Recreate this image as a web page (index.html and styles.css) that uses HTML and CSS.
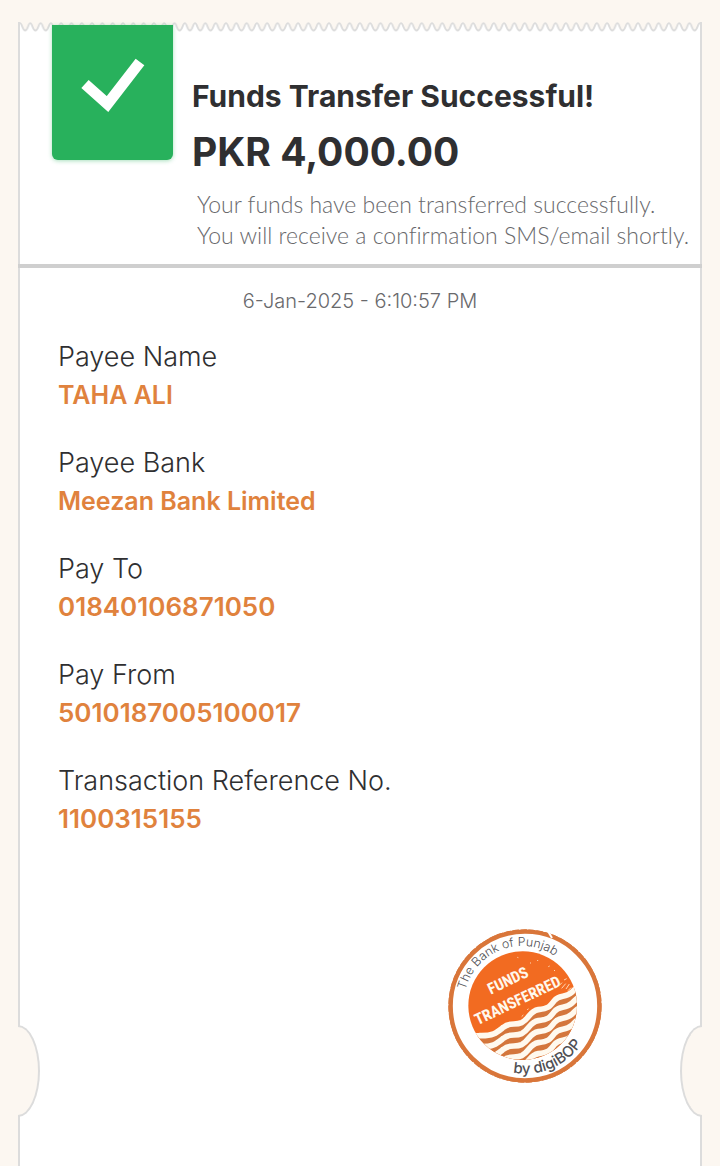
FILE: index.html
```html
<!DOCTYPE html>
<html lang="en">
<head>
<meta charset="utf-8">
<meta name="viewport" content="width=device-width, initial-scale=1">
<title>Funds Transfer Successful</title>
<link rel="stylesheet" href="styles.css">
</head>
<body>
<main class="page">
  <svg class="tear" aria-hidden="true">
    <defs>
      <pattern id="scallop" x="2" width="10.3" height="10" patternUnits="userSpaceOnUse">
        <path d="M0 1 C2 1 2.4 8.5 5.15 8.5 S8.3 1 10.3 1 V10 H0Z" fill="#fff"/>
        <path d="M-1 1.2 H0 C2 1 2.4 8.5 5.15 8.5 S8.3 1 10.3 1.2 H12" fill="none" stroke="#dcdcdc" stroke-width="1.8"/>
      </pattern>
    </defs>
    <rect width="100%" height="10" fill="url(#scallop)"/>
    <rect width="2" height="10" fill="#dcdcdc"/>
    <svg x="100%" overflow="visible"><rect x="-2" width="2" height="10" fill="#dcdcdc"/></svg>
  </svg>
  <article class="receipt">
    <header class="summary">
      <div class="badge">
        <svg class="tick" viewBox="0 0 64 54" aria-hidden="true"><path d="M4 26 L26.500 46 L59 4" fill="none" stroke="#fff" stroke-width="11"/></svg>
      </div>
      <div class="headline">
        <h1 class="title">Funds Transfer Successful!</h1>
        <p class="amount">PKR 4,000.00</p>
        <p class="message">Your funds have been transferred successfully.<br>You will receive a confirmation SMS/email shortly.</p>
      </div>
    </header>
    <time class="date" datetime="2025-01-06T18:10:57">6-Jan-2025 - 6:10:57 PM</time>
    <dl class="details">
      <div class="row"><dt class="label">Payee Name</dt><dd class="value">TAHA ALI</dd></div>
      <div class="row"><dt class="label">Payee Bank</dt><dd class="value">Meezan Bank Limited</dd></div>
      <div class="row"><dt class="label">Pay To</dt><dd class="value number">01840106871050</dd></div>
      <div class="row"><dt class="label">Pay From</dt><dd class="value number">5010187005100017</dd></div>
      <div class="row"><dt class="label">Transaction Reference No.</dt><dd class="value number">1100315155</dd></div>
    </dl>
    <svg class="stamp" viewBox="0 0 510 510" role="img" aria-label="Funds transferred stamp">
      <defs>
        <clipPath id="disc"><circle cx="248" cy="257" r="163"/></clipPath>
        <path id="wave" d="M70 352 C100 342 100 350 120 347 C160 348 170 338 190 322 C210 305 225 317 245 308 C268 297 268 273 295 269 C325 265 328 262 343 242 C358 222 375 235 395 217 C410 203 410 200 430 195"/>
        <path id="arc-top" d="M76 210 A176 176 0 0 1 400 168"/>
        <path id="arc-bottom" d="M219 458 A206 206 0 0 0 461 258"/>
      </defs>
      <circle cx="255" cy="258" r="223" fill="#fff" stroke="#d9763a" stroke-width="13"/>
      <circle cx="255" cy="258" r="227" fill="none" stroke="#d9763a" stroke-width="6" stroke-linecap="round" stroke-dasharray="16 8"/>
      <path d="M324 34 L336 54" stroke="#fff" stroke-width="6"/>
      <g clip-path="url(#disc)">
        <rect x="80" y="90" width="340" height="340" fill="#f26b21"/>
        <path d="M70 352 C100 342 100 350 120 347 C160 348 170 338 190 322 C210 305 225 317 245 308 C268 297 268 273 295 269 C325 265 328 262 343 242 C358 222 375 235 395 217 C410 203 410 200 430 195 V430 H70Z" fill="#d4763c"/>
        <g fill="none" stroke="#fff9ee" stroke-width="17">
          <use href="#wave"/>
          <use href="#wave" y="33"/>
          <use href="#wave" y="66"/>
          <use href="#wave" y="99"/>
          <use href="#wave" y="132"/>
          <use href="#wave" y="165"/>
        </g>
        <path d="M365 205 l12 -14 M378 207 l10 -15 M358 196 l8 -8 M372 180 l8 -4 M384 212 l9 -9 M270 128 l3 2 M292 120 l2 3 M325 140 l4 -2 M342 150 l3 3 M232 112 l3 1 M245 290 l5 -5 M262 270 l3 -4" stroke="#ffd9b8" stroke-width="3"/>
      </g>
      <text class="ring ring-light"><textPath href="#arc-top">The Bank of Punjab</textPath></text>
      <text class="ring ring-bold"><textPath href="#arc-bottom">by digiBOP</textPath></text>
      <g class="stamp-text">
        <text transform="translate(152 224) rotate(-25.500)">FUNDS</text>
        <text transform="translate(113 316) rotate(-25.500)">TRANSFERRED</text>
      </g>
    </svg>
    <span class="notch notch-left"></span>
    <span class="notch notch-right"></span>
  </article>
</main>
</body>
</html>
```
FILE: styles.css
```css
* { box-sizing: border-box; }
body { margin: 0; background: #fcf7f1; color: #2f2f31; font-family: Inter, "Liberation Sans", sans-serif; }
h1, p, dl, dd { margin: 0; }
.page { display: flex; flex-direction: column; min-height: 100vh; padding: 22px 18px 0; }
.tear { display: block; width: 100%; height: 10px; }
.receipt { position: relative; flex: 1; display: flex; flex-direction: column; background: #fff; border: solid #dcdcdc; border-width: 0 2px; }
.summary { display: flex; align-items: flex-start; gap: 19px; margin: 0 -2px; padding: 0 4px 13px 34px; border-bottom: 4px solid #cfcfcf; }
.badge { flex: none; display: flex; justify-content: center; width: 121px; height: 135px; margin-top: -7px; padding-top: 33px; background: #28b15c; border-radius: 0 0 6px 6px; box-shadow: 0 1px 4px #28b15c66; }
.tick { width: 64px; height: 54px; }
.headline { padding-top: 45px; }
.title { font-size: 30px; line-height: 38px; font-weight: 700; }
.amount { margin-top: 12px; font-size: 39px; line-height: 50px; font-weight: 700; }
.message { margin-top: 12px; padding-left: 5px; font-family: Lato, sans-serif; font-size: 23px; line-height: 31px; font-weight: 300; font-variant-ligatures: none; color: #69696c; }
.date { margin-top: 17px; text-align: center; font-size: 20px; line-height: 32px; font-weight: 300; color: #69696c; }
.details { display: flex; flex-direction: column; gap: 30px; margin-top: 21px; padding: 0 38px; }
.label { font-size: 27px; line-height: 38px; font-weight: 300; }
.value { font-size: 25px; line-height: 38px; font-weight: 600; color: #e0823d; }
.number { font-size: 26px; }
.stamp { align-self: flex-end; width: 170px; height: 170px; margin: 82px 90px 75px 0; }
.ring { fill: #505054; }
.ring-light { font-size: 37px; font-weight: 300; }
.ring-bold { font-size: 45px; font-weight: 500; }
.stamp-text { fill: #fff8ec; font-family: "Roboto Condensed", Roboto, "Liberation Sans", sans-serif; font-size: 47px; font-weight: 700; }
.notch { position: absolute; bottom: 49px; width: 22px; height: 92px; background: #fcf7f1; border: 2px solid #dcdcdc; }
.notch-left { left: -2px; border-left: 0; border-radius: 0 100% 100% 0 / 0 50% 50% 0; }
.notch-right { right: -2px; border-right: 0; border-radius: 100% 0 0 100% / 50% 0 0 50%; }
```
